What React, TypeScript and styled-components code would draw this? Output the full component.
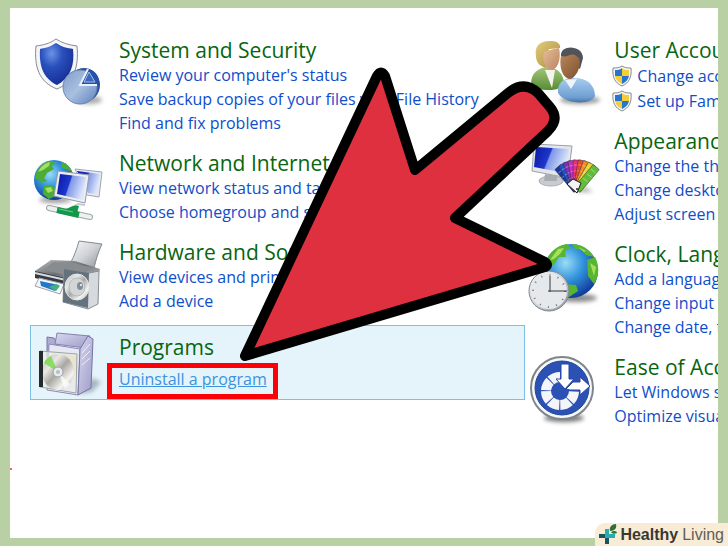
import React from "react";
import styled, { createGlobalStyle, css } from "styled-components";

const GlobalStyle = createGlobalStyle`
  * { box-sizing: border-box; }
  body {
    margin: 0;
    background: #b9d0a4;
    font-family: "Open Sans", "Noto Sans", sans-serif;
  }
`;

const Page = styled.div`
  position: relative;
  display: flex;
  min-height: 100vh;
  padding: 8px 10px;
  overflow: hidden;
`;

const Panel = styled.main`
  flex: 1;
  min-width: 0;
  display: grid;
  grid-template-columns: minmax(0, 18fr) minmax(0, 7fr);
  align-items: start;
  padding: 22px 0 22px 20px;
  background: #fff;
  overflow: hidden;
`;

const Column = styled.div`
  display: flex;
  flex-direction: column;
  min-width: 0;
`;

const Category = styled.section<{ $selected?: boolean }>`
  display: flex;
  align-items: flex-start;
  padding: 8px 0 7px;
  border: 1px solid transparent;
  ${(p) =>
    p.$selected &&
    css`
      margin-top: 4px;
      padding: 10px 0 8px;
      border-color: #7cc0e4;
      background: #e5f3fb;
    `}
`;

const CategoryIcon = styled.svg`
  flex: none;
  width: 88px;
  height: 54px;
  overflow: visible;
`;

const CategoryText = styled.div<{ $gap?: boolean }>`
  display: flex;
  flex-direction: column;
  align-items: flex-start;
  gap: ${(p) => (p.$gap ? 7 : 0)}px;
  white-space: nowrap;
`;

const Title = styled.h2`
  margin: 0;
  padding-bottom: 2px;
  font-size: 21px;
  font-weight: 400;
  line-height: 22px;
  color: #07660f;
`;

const TaskRow = styled.div`
  display: flex;
  align-items: center;
  gap: 5px;
`;

const ShieldRow = styled(TaskRow)`
  height: 25px;
  margin-left: -2px;
`;

const TaskLink = styled.a<{ $marked?: boolean }>`
  font-size: 16px;
  line-height: 24px;
  color: #0f4dcb;
  text-decoration: none;
  ${(p) =>
    p.$marked &&
    css`
      position: relative;
      color: #3c93e0;
      text-decoration: underline;
      &::after {
        content: "";
        position: absolute;
        inset: -4px -11px -8px -12px;
        border: 5px solid #fb0007;
      }
    `}
`;

const SmallShield = styled.svg`
  flex: none;
  width: 20px;
  height: 22px;
`;

const Pointer = styled.svg`
  position: absolute;
  top: 0;
  left: 0;
  width: 728px;
  height: 546px;
  pointer-events: none;
`;

const Brand = styled.footer`
  position: absolute;
  right: 0;
  bottom: 0;
  display: flex;
  align-items: center;
  height: 23px;
  padding: 0 4px 0 3px;
  border-top-left-radius: 10px;
  background: #f8ecd6;
  font-family: "Liberation Sans", Arial, sans-serif;
  font-size: 16px;
  line-height: 23px;
  color: #625d54;
  white-space: nowrap;
`;

const BrandName = styled.strong`
  margin-right: 4px;
  color: #3b3833;
`;

const BrandMark = styled.svg`
  width: 20px;
  height: 22px;
  margin-right: 2px;
`;

const Defs = () => (
  <defs>
    <radialGradient id="blue" cx=".35" cy=".25" r=".8">
      <stop offset="0" stopColor="#6d93e6" />
      <stop offset=".4" stopColor="#2a50bd" />
      <stop offset="1" stopColor="#132c92" />
    </radialGradient>
    <linearGradient id="steel" x1="0" y1="0" x2="1" y2="1">
      <stop offset="0" stopColor="#7f9cc8" />
      <stop offset=".5" stopColor="#a9c0e0" />
      <stop offset="1" stopColor="#5d80bb" />
    </linearGradient>
    <linearGradient id="screen" x1="0" y1="0" x2="1" y2=".3">
      <stop offset="0" stopColor="#0a16a4" />
      <stop offset=".48" stopColor="#1d38cb" />
      <stop offset=".52" stopColor="#7e96e8" />
      <stop offset="1" stopColor="#dbe5fa" />
    </linearGradient>
    <radialGradient id="sea" cx=".4" cy=".35" r=".65">
      <stop offset="0" stopColor="#9adcf6" />
      <stop offset=".5" stopColor="#3192dc" />
      <stop offset="1" stopColor="#123f9c" />
    </radialGradient>
    <linearGradient id="silver" x1="0" y1="0" x2="1" y2="1">
      <stop offset="0" stopColor="#f7f8f9" />
      <stop offset=".5" stopColor="#cfd3d7" />
      <stop offset="1" stopColor="#8c9298" />
    </linearGradient>
    <linearGradient id="graphite" x1="0" y1="0" x2="1" y2="1">
      <stop offset="0" stopColor="#b9bcbf" />
      <stop offset=".5" stopColor="#6c7074" />
      <stop offset="1" stopColor="#c9ccd0" />
    </linearGradient>
    <linearGradient id="disc" x1="0" y1="0" x2="1" y2="1">
      <stop offset="0" stopColor="#b5b5b5" />
      <stop offset=".3" stopColor="#e9e7e2" />
      <stop offset=".5" stopColor="#a9a7a2" />
      <stop offset=".75" stopColor="#f4f3f0" />
      <stop offset="1" stopColor="#aaa" />
    </linearGradient>
    <linearGradient id="lilac" x1="0" y1="0" x2="1" y2="1">
      <stop offset="0" stopColor="#d9d8f0" />
      <stop offset="1" stopColor="#9d9cc6" />
    </linearGradient>
    <linearGradient id="greenShirt" x1="0" y1="0" x2="0" y2="1">
      <stop offset="0" stopColor="#a4c877" />
      <stop offset="1" stopColor="#568c35" />
    </linearGradient>
    <linearGradient id="blueShirt" x1="0" y1="0" x2="0" y2="1">
      <stop offset="0" stopColor="#a9cdf0" />
      <stop offset=".8" stopColor="#6d9ed2" />
      <stop offset="1" stopColor="#47739f" />
    </linearGradient>
    <linearGradient id="paleFace" x1="0" y1="0" x2="1" y2="1">
      <stop offset="0" stopColor="#e6bd98" />
      <stop offset="1" stopColor="#b98460" />
    </linearGradient>
    <linearGradient id="tanFace" x1="0" y1="0" x2="1" y2="1">
      <stop offset="0" stopColor="#b88558" />
      <stop offset="1" stopColor="#7c5130" />
    </linearGradient>
    <linearGradient id="blond" x1="0" y1="0" x2="1" y2="1">
      <stop offset="0" stopColor="#e3cd7c" />
      <stop offset="1" stopColor="#a98c3f" />
    </linearGradient>
    <filter id="soft" x="-30%" y="-80%" width="160%" height="260%">
      <feGaussianBlur stdDeviation="2" />
    </filter>
  </defs>
);

const SecurityIcon = () => (
  <CategoryIcon viewBox="0 0 88 54" aria-hidden="true">
    <Defs />
    <ellipse cx="58" cy="61" rx="13" ry="4" fill="#aaa" filter="url(#soft)" />
    <path d="M25 0C18 5 12 6 5 7C3 28 8 43 26 50C43 43 48 28 46 7C38 6 31 4 25 0Z" fill="#f4f5f7" stroke="#858b95" strokeWidth="1" />
    <path d="M25 4C19 8 14 9 9 10C8 27 12 39 26 46C39 39 44 27 42 10C36 9 31 8 25 4Z" fill="url(#blue)" />
    <ellipse cx="53" cy="46" rx="16" ry="17" fill="#2c4f9f" />
    <circle cx="49" cy="48" r="17" fill="url(#steel)" stroke="#6984b2" />
    <path d="M49 46L57 30C65 32 69 38 67 46Z" fill="#2750ac" />
    <path d="M53 43L58 33L64 43Z" fill="#3a66bd" stroke="#a9c0e6" strokeWidth="1" />
    <path d="M57 30L49 46H66" fill="none" stroke="#e9f1fa" strokeWidth="2" />
  </CategoryIcon>
);

const NetworkIcon = () => (
  <CategoryIcon viewBox="0 0 88 54" aria-hidden="true">
    <ellipse cx="24" cy="48" rx="16" ry="3" fill="#999" filter="url(#soft)" />
    <circle cx="23" cy="28" r="20" fill="url(#sea)" />
    <path d="M4 27C5 18 11 10 19 9L25 11L21 14L23 17L16 21L13 26L16 29L10 31L7 27ZM30 10C35 11 40 15 41 20L34 17L30 15ZM13 34L20 33L26 37L24 44L18 47L12 42Z" fill="#4cad36" />
    <path d="M7 20C10 14 14 11 19 10L18 14L12 18ZM14 36L20 35L22 39L17 41Z" fill="#a4df62" />
    <path d="M44 17L71 20L68 45L56 43Z" fill="#e6e9ef" stroke="#a1a6b0" />
    <path d="M46 19L69 22L66 42L57 41Z" fill="url(#screen)" />
    <path d="M27 19L58 23L54 51L23 44Z" fill="#eceef2" stroke="#969ba7" />
    <path d="M29 22L55 25L52 48L26 42Z" fill="url(#screen)" />
    <path d="M40 56L47 52L54 53" fill="none" stroke="#c4cbd0" strokeWidth="2" />
    <path d="M18 56L59 65" stroke="#9ca8a6" strokeWidth="6" strokeLinecap="round" />
    <path d="M18 56L59 65" stroke="#edf2f1" strokeWidth="4" strokeLinecap="round" />
    <path d="M26 58L48 63" stroke="#14974b" strokeWidth="6" />
    <path d="M34 57C39 56 42 52 48 54L46 61Z" fill="#14974b" />
    <path d="M28 57L42 60" stroke="#69d48d" strokeWidth="1" />
  </CategoryIcon>
);

const HardwareIcon = () => (
  <CategoryIcon viewBox="0 0 88 54" aria-hidden="true">
    <path d="M48 0L71 3C67 11 65 19 63 27L40 21C43 15 46 8 48 0Z" fill="url(#silver)" stroke="#858a8f" />
    <path d="M4 30L20 19L44 20L69 28L66 39L35 40Z" fill="url(#graphite)" />
    <path d="M22 21L43 22L61 27L38 35L13 29Z" fill="#898c8f" />
    <path d="M4 30L35 37V45L4 37Z" fill="#343a40" />
    <path d="M4 32L35 39" stroke="#d6dadd" strokeWidth="2" />
    <path d="M8 37L33 43L29 53L4 45Z" fill="#f2f7fb" stroke="#9aa1a7" />
    <path d="M9 40L28 44L24 50L10 45Z" fill="#2477c7" />
    <path d="M18 46L25 43L29 45L25 50Z" fill="#4aad7d" />
    <path d="M33 28L58 32L68 30L67 63L57 68L32 61Z" fill="#d7dadc" stroke="#878d93" />
    <path d="M33 28L58 32L57 67L32 61Z" fill="#64727d" />
    <ellipse cx="46" cy="46" rx="12" ry="13" fill="url(#disc)" stroke="#e5e9ed" />
    <ellipse cx="46" cy="46" rx="8" ry="9" fill="#d3d6d9" stroke="#b4b9bd" />
    <ellipse cx="49" cy="45" rx="3" ry="4" fill="#858c92" />
    <circle cx="50" cy="44" r="1" fill="#fff" />
  </CategoryIcon>
);

const ProgramsIcon = () => (
  <CategoryIcon viewBox="0 0 88 54" aria-hidden="true">
    <path d="M61 42L70 46L61 56L48 58Z" fill="#a4b6c2" filter="url(#soft)" />
    <path d="M16 1L23 2L26 7V30L16 22Z" fill="#aeacd2" stroke="#7774a5" />
    <path d="M26 -3L59 0L54 12L24 8Z" fill="url(#lilac)" stroke="#8582ad" />
    <path d="M18 8L49 13L47 59L16 54Z" fill="#e8e7f6" stroke="#8d8ab5" />
    <path d="M49 13L57 0L62 3L60 52L47 59Z" fill="url(#lilac)" stroke="#7774a5" />
    <path d="M51 17L59 8M51 23L59 15M51 29L59 22" stroke="#f0eff9" />
    <path d="M33 18L46 20L44 39L33 34Z" fill="#e9b96a" opacity=".7" />
    <path d="M9 15L46 18L45 57L9 51Z" fill="#e7eee7" fillOpacity=".75" stroke="#9da6a4" />
    <ellipse cx="27" cy="36" rx="16" ry="18" fill="url(#disc)" />
    <path d="M27 36L13 27C15 23 17 21 20 20Z" fill="#74db49" opacity=".8" />
    <path d="M27 36L39 48L34 53Z" fill="#fff" opacity=".7" />
    <circle cx="27" cy="36" r="5" fill="#e9ebee" stroke="#9ea2a6" />
    <circle cx="27" cy="36" r="2" fill="#b6bdc4" />
    <path d="M8 15H12V51H8Z" fill="#24292c" />
  </CategoryIcon>
);

const UsersIcon = () => (
  <CategoryIcon viewBox="0 0 88 54" aria-hidden="true">
    <ellipse cx="54" cy="61" rx="20" ry="4" fill="#999" filter="url(#soft)" />
    <path d="M5 45C5 34 12 29 21 28C31 28 38 35 38 45C35 53 11 53 5 45Z" fill="url(#greenShirt)" />
    <path d="M19 31L29 31L26 49Z" fill="#f3f4ef" />
    <path d="M10 17C8 6 15 1 26 2C32 2 35 6 34 9C30 9 28 10 23 10L20 29C14 27 10 24 10 17Z" fill="url(#blond)" />
    <path d="M18 13C23 11 27 10 33 9C35 18 33 30 25 31C20 30 16 23 18 13Z" fill="url(#paleFace)" />
    <path d="M32 54C31 44 38 39 46 39C60 38 69 45 69 57C66 66 39 66 32 54Z" fill="url(#blueShirt)" />
    <path d="M39 41L51 40L45 50Z" fill="#edf4fa" />
    <path d="M35 17C34 5 57 6 57 19L54 30L47 24Z" fill="#50545a" />
    <path d="M35 17C42 19 44 14 49 16L53 19C56 27 50 39 44 40C36 39 33 27 35 17Z" fill="url(#tanFace)" />
  </CategoryIcon>
);

const blades = ["#1538a0", "#2452c4", "#7b31bc", "#c92bc5", "#e92f78", "#ec482c", "#f08d25", "#e9d232", "#61bd36"];

const AppearanceIcon = () => (
  <CategoryIcon viewBox="0 0 88 54" aria-hidden="true">
    <ellipse cx="25" cy="51" rx="12" ry="5" fill="#c8cbcf" stroke="#aaadb2" />
    <path d="M19 44L31 46V51H18Z" fill="#a9adb2" />
    <path d="M8 14L46 16L42 48L6 41Z" fill="#e3e6ea" stroke="#9ba1a9" />
    <path d="M10 17L43 19L39 43L8 37Z" fill="url(#screen)" />
    <path d="M49 62H67L59 57Z" fill="#aaa" filter="url(#soft)" />
    {blades.map((color, i) => (
      <g key={color} transform={`rotate(${-40 + i * 10} 51 60)`}>
        <rect x="47" y="30" width="8" height="30" rx="1" fill={color} stroke="#303039" strokeWidth=".5" />
        <path d="M48 35H54M48 41H54M48 47H54" stroke="#fff" strokeOpacity=".35" />
      </g>
    ))}
    <path d="M41 54L47 49L55 53L51 63Z" fill="#f4f4f5" stroke="#1b1b20" />
    <circle cx="51" cy="59" r="1" fill="#292930" />
  </CategoryIcon>
);

const ClockIcon = () => (
  <CategoryIcon viewBox="0 0 88 54" aria-hidden="true">
    <ellipse cx="51" cy="55" rx="20" ry="4" fill="#888" filter="url(#soft)" />
    <circle cx="45" cy="28" r="27" fill="url(#sea)" />
    <path d="M19 20C23 9 32 2 41 1L44 5L39 8L40 14L33 14L28 22L20 24ZM46 1C56 1 64 7 68 14L60 12L56 7L49 6ZM61 17L69 14C74 24 73 33 68 41L62 33ZM38 41L50 42L52 48L43 54L36 52Z" fill="#56b632" />
    <path d="M24 17L32 6L38 5L34 11L28 16ZM52 4L60 8L58 9ZM64 20L70 24L68 33Z" fill="#a9df58" />
    <circle cx="23" cy="48" r="20" fill="url(#silver)" stroke="#80868d" />
    <circle cx="23" cy="48" r="18" fill="#e5e9ec" />
    <circle cx="23" cy="48" r="16" fill="none" stroke="#73797e" strokeWidth="2" strokeDasharray="1 7.38" />
    <path d="M24 33V49M22 48H41" stroke="#34393d" strokeWidth="1" />
  </CategoryIcon>
);

const EaseIcon = () => (
  <CategoryIcon viewBox="0 0 88 54" aria-hidden="true">
    <ellipse cx="38" cy="62" rx="20" ry="4" fill="#777" filter="url(#soft)" />
    <circle cx="36" cy="32" r="31" fill="#f7f8fa" stroke="#7e858d" strokeWidth="2" />
    <circle cx="36" cy="32" r="27" fill="#2b51b4" stroke="#214794" />
    <path d="M34 21A14 14 0 1 0 48 35" fill="none" stroke="#f3f5f8" strokeWidth="10" strokeDasharray="10 1" />
    <path d="M35 8H43V23H48L39 33L30 23H35Z" fill="#fff" stroke="#2447a5" />
    <path d="M40 33L47 26H54V21L64 30L54 39V34H44Z" fill="#fff" stroke="#2447a5" />
  </CategoryIcon>
);

const UacShield = () => (
  <SmallShield viewBox="0 0 20 22" aria-hidden="true">
    <path d="M10 1C7 3 4 3 1 3C0 12 3 18 10 21C17 18 20 12 19 3C16 3 13 3 10 1Z" fill="#f4f6f7" stroke="#858a8e" />
    <path d="M10 3C8 5 5 5 3 5V11H10Z" fill="#2676cf" />
    <path d="M10 3C12 5 15 5 17 5V11H10Z" fill="#f5ce37" />
    <path d="M3 11H10V19C6 17 4 15 3 11Z" fill="#f5ce37" />
    <path d="M17 11H10V19C14 17 16 15 17 11Z" fill="#2676cf" />
  </SmallShield>
);

type Task = { label: string; shield?: boolean; marked?: boolean };
type Entry = { title: string; icon: React.FC; tasks: Task[]; selected?: boolean };

const left: Entry[] = [
  {
    title: "System and Security",
    icon: SecurityIcon,
    tasks: [
      { label: "Review your computer's status" },
      { label: "Save backup copies of your files with File History" },
      { label: "Find and fix problems" },
    ],
  },
  {
    title: "Network and Internet",
    icon: NetworkIcon,
    tasks: [{ label: "View network status and tasks" }, { label: "Choose homegroup and sharing options" }],
  },
  {
    title: "Hardware and Sound",
    icon: HardwareIcon,
    tasks: [{ label: "View devices and printers" }, { label: "Add a device" }],
  },
  {
    title: "Programs",
    icon: ProgramsIcon,
    selected: true,
    tasks: [{ label: "Uninstall a program", marked: true }],
  },
];

const right: Entry[] = [
  {
    title: "User Accounts and Family Safety",
    icon: UsersIcon,
    tasks: [
      { label: "Change account type", shield: true },
      { label: "Set up Family Safety for any user", shield: true },
    ],
  },
  {
    title: "Appearance and Personalization",
    icon: AppearanceIcon,
    tasks: [
      { label: "Change the theme" },
      { label: "Change desktop background" },
      { label: "Adjust screen resolution" },
    ],
  },
  {
    title: "Clock, Language, and Region",
    icon: ClockIcon,
    tasks: [
      { label: "Add a language" },
      { label: "Change input methods" },
      { label: "Change date, time, or number formats" },
    ],
  },
  {
    title: "Ease of Access",
    icon: EaseIcon,
    tasks: [{ label: "Let Windows suggest settings" }, { label: "Optimize visual display" }],
  },
];

const CategoryList = ({ entries }: { entries: Entry[] }) => (
  <Column>
    {entries.map(({ title, icon: Icon, tasks, selected }) => (
      <Category key={title} $selected={selected}>
        <Icon />
        <CategoryText $gap={selected}>
          <Title>{title}</Title>
          {tasks.map(({ label, shield, marked }) => {
            const Row = shield ? ShieldRow : TaskRow;
            return (
              <Row key={label}>
                {shield && <UacShield />}
                <TaskLink href="#" $marked={marked}>
                  {label}
                </TaskLink>
              </Row>
            );
          })}
        </CategoryText>
      </Category>
    ))}
  </Column>
);

export default function App() {
  return (
    <>
      <GlobalStyle />
      <Page>
        <Panel>
          <CategoryList entries={left} />
          <CategoryList entries={right} />
        </Panel>
        <Pointer viewBox="0 0 728 546" aria-hidden="true">
          <path
            d="M245 356L377 76Q381 69 385 76L415 170L508 93Q524 80 538 93L550 107Q560 119 548 131L455 218L545 262Q549 265 545 267Z"
            fill="#df303f"
            stroke="#000"
            strokeWidth="10"
            strokeLinejoin="round"
          />
          <circle cx="11" cy="469" r="1" fill="#d8344a" />
        </Pointer>
        <Brand>
          <BrandMark viewBox="0 0 20 22" aria-hidden="true">
            <path d="M7 5H11V10H17V14H11V20H7V14H1V10H7Z" fill="#27acb2" />
            <path d="M7 14H11V20H7ZM1 10H7V14H1Z" fill="#1b5360" />
            <path d="M12 7C11 3 14 0 18 0C19 4 17 7 12 7ZM13 8C16 6 19 7 19 9C16 10 14 10 13 8Z" fill="#2e7034" />
          </BrandMark>
          <BrandName>Healthy</BrandName>
          <span>Living</span>
        </Brand>
      </Page>
    </>
  );
}
